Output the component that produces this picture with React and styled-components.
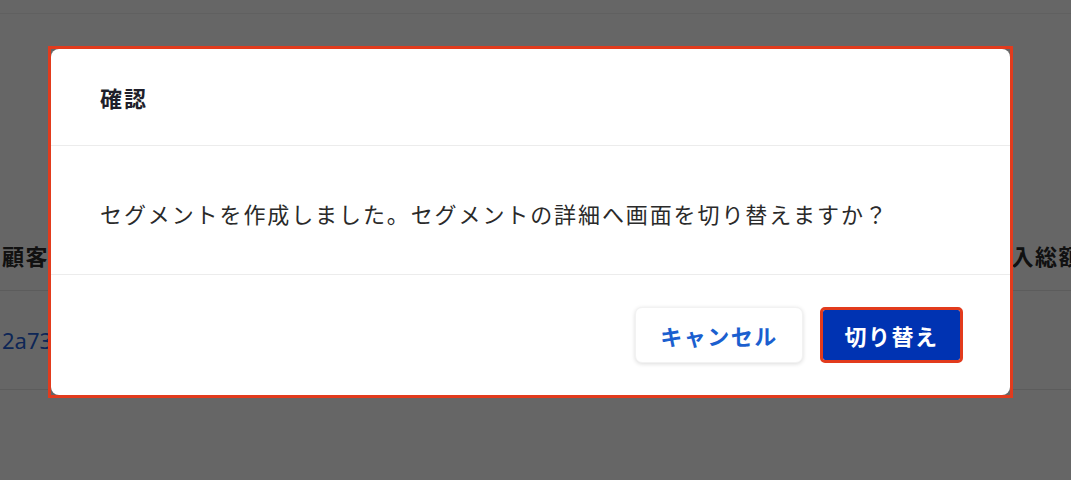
import styled, { createGlobalStyle } from "styled-components";

const GlobalStyle = createGlobalStyle`
  html, body {
    margin: 0;
    padding: 0;
    height: 100%;
    overflow: hidden;
    background: #ffffff;
  }
  body {
    font-family: "Noto Sans", "Noto Sans CJK JP", sans-serif;
    color: #333333;
  }
`;

const Page = styled.div`
  position: relative;
  width: 1071px;
  height: 480px;
  overflow: hidden;
  background: #ffffff;
`;

const TopBar = styled.div`
  height: 13px;
  border-bottom: 1px solid #f1f1f1;
`;

const Table = styled.div`
  margin-top: 206px;
`;

const Row = styled.div`
  display: grid;
  grid-template-columns: 986px 200px;
  align-items: center;
  height: ${(p) => p.$height}px;
  padding-left: 2px;
  border-bottom: 1px solid #e6e6e6;
  white-space: nowrap;
`;

const HeadCell = styled.div`
  font-family: "Noto Sans CJK JP", sans-serif;
  font-size: 22px;
  font-weight: 700;
  letter-spacing: 1.5px;
  color: #2b2b2b;
`;

const LinkCell = styled.div`
  font-family: "Noto Sans", "Noto Sans CJK JP", sans-serif;
  font-size: 22px;
  color: #2460d8;
`;

const Overlay = styled.div`
  position: absolute;
  inset: 0;
  background: rgba(0, 0, 0, 0.6);
  display: flex;
  align-items: flex-start;
  padding: 49px 0 0 51px;
`;

const FocusFrame = styled.div`
  outline: 3px solid #e23b1d;
`;

const Dialog = styled.div`
  width: 959px;
  background: #ffffff;
  border-radius: 8px;
  font-family: "Noto Sans CJK JP", sans-serif;
`;

const Header = styled.div`
  height: 96px;
  display: flex;
  align-items: center;
  padding-left: 49px;
  border-bottom: 1px solid #ececec;
`;

const Title = styled.h2`
  margin: 0;
  font-size: 22px;
  font-weight: 700;
  letter-spacing: 2px;
  color: #1f1f2b;
`;

const Body = styled.div`
  height: 129px;
  display: flex;
  align-items: center;
  padding: 6px 0 0 49px;
  box-sizing: border-box;
  border-bottom: 1px solid #ececec;
`;

const Message = styled.p`
  margin: 0;
  font-size: 22px;
  letter-spacing: 1.9px;
  color: #2a2a2a;
`;

const Footer = styled.div`
  height: 120px;
  display: flex;
  align-items: center;
  justify-content: flex-end;
  gap: 20px;
  padding-right: 47px;
`;

const Button = styled.button`
  font-family: "Noto Sans CJK JP", sans-serif;
  font-size: 22px;
  font-weight: 700;
  letter-spacing: 1.5px;
  cursor: pointer;
  box-sizing: border-box;
  ${(p) =>
    p.$primary
      ? `
    height: 50px;
    width: 137px;
    margin: 1px 3px 2px 0;
    background: #0033b2;
    color: #ffffff;
    border: none;
    border-radius: 2px;
    outline: 3px solid #e23b1d;
  `
      : `
    height: 56px;
    width: 168px;
    background: #ffffff;
    color: #1b5fcf;
    border: 1px solid #f2f2f2;
    border-radius: 7px;
    box-shadow: 0 1px 4px rgba(0, 0, 0, 0.14);
  `}
`;

export default function App() {
  return (
    <>
      <GlobalStyle />
      <Page>
        <TopBar />
        <Table>
          <Row $height={70}>
            <HeadCell>顧客ID</HeadCell>
            <HeadCell>購入総額</HeadCell>
          </Row>
          <Row $height={98}>
            <LinkCell>2a73f0c9-51d8</LinkCell>
            <LinkCell />
          </Row>
        </Table>
        <Overlay>
          <FocusFrame>
            <Dialog role="dialog" aria-modal="true">
              <Header>
                <Title>確認</Title>
              </Header>
              <Body>
                <Message>
                  セグメントを作成しました。セグメントの詳細へ画面を切り替えますか？
                </Message>
              </Body>
              <Footer>
                <Button>キャンセル</Button>
                <Button $primary>切り替え</Button>
              </Footer>
            </Dialog>
          </FocusFrame>
        </Overlay>
      </Page>
    </>
  );
}
